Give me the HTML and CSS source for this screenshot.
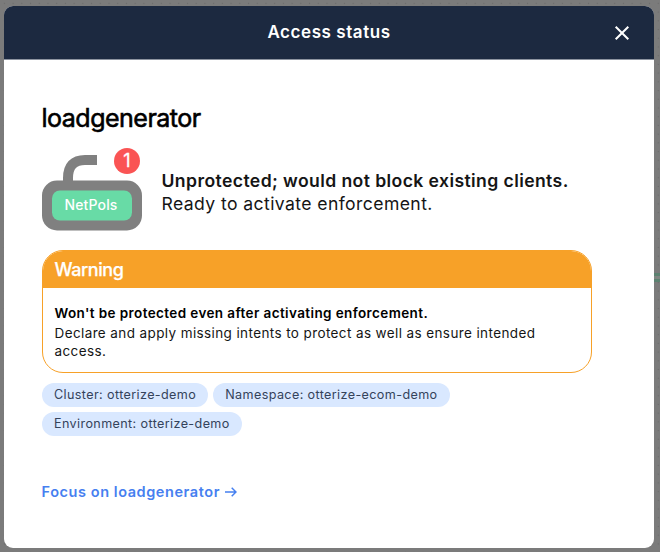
FILE: index.html
```html
<!DOCTYPE html>
<html lang="en">
<head>
<meta charset="utf-8">
<title>Access status</title>
<link rel="stylesheet" href="styles.css">
</head>
<body>
<div class="edge"></div>
<main class="modal">
  <header class="modal-header">
    <h1 class="title">Access status</h1>
    <button class="close" aria-label="Close"><svg width="16" height="17" viewBox="0 0 16 17"><path d="M1.7 2.7L14.3 15.3M14.3 2.7L1.7 15.3" stroke="#fff" stroke-width="2"/></svg></button>
  </header>
  <section class="content">
    <h2 class="service">loadgenerator</h2>
    <div class="status">
      <div class="lock">
        <svg width="100" height="84" viewBox="0 0 100 84">
          <path d="M26 36V30Q26 12 43 12H55" fill="none" stroke="#808080" stroke-width="10"/>
          <rect y="32.5" width="100" height="50" rx="15" fill="#808080"/>
          <rect x="10" y="42.5" width="80" height="30" rx="8" fill="#68dba6"/>
        </svg>
        <span class="lock-label">NetPols</span>
        <span class="count">1</span>
      </div>
      <div class="status-text">
        <strong class="status-main">Unprotected; would not block existing clients.</strong>
        <span class="status-sub">Ready to activate enforcement.</span>
      </div>
    </div>
    <div class="warning">
      <h3 class="warning-title">Warning</h3>
      <div class="warning-body">
        <strong class="warning-main">Won't be protected even after activating enforcement.</strong>
        <p class="warning-sub">Declare and apply missing intents to protect as well as ensure intended access.</p>
      </div>
    </div>
    <div class="tags">
      <span class="tag cluster">Cluster: otterize-demo</span>
      <span class="tag namespace">Namespace: otterize-ecom-demo</span>
      <span class="tag environment">Environment: otterize-demo</span>
    </div>
    <a class="focus">Focus on loadgenerator <svg width="12" height="12" viewBox="0 0 12 12"><path d="M0 6H11M6.7 1.8L11 6L6.7 10.2" fill="none" stroke="currentColor" stroke-width="1.5"/></svg></a>
  </section>
</main>
</body>
</html>
```
FILE: styles.css
```css
* { box-sizing: border-box; }
body { position: relative; margin: 0; height: 552px; padding: 5.5px 6px 4px 4px; background: #7b7b7b radial-gradient(circle at center, #6b6b6b 0.7px, transparent 1px) 0 -1px / 8.73px 8.73px; font-family: Inter, sans-serif; color: #151515; overflow: hidden; }
h1, h2, h3, p { margin: 0; }
.edge { position: absolute; right: 0; top: 273px; width: 6px; height: 9px; border: solid #5c8271; border-width: 3px 0; background: #808682; }
.modal { position: relative; height: 542.5px; background: #fff; border-radius: 9px; overflow: hidden; }
.modal-header { height: 54px; background: #1c2940; border-bottom: 1px solid #8d94a0; display: grid; grid-template-columns: 64px 1fr 64px; align-items: center; }
.title { grid-column: 2; text-align: center; color: #fff; font-size: 17px; font-weight: 600; line-height: 20px; letter-spacing: .56px; }
.close { border: 0; background: none; padding: 0; display: flex; justify-content: center; }
.service { margin-left: -.5px; font-size: 25px; line-height: 30px; font-weight: 400; letter-spacing: -.5px; color: #000; -webkit-text-stroke: .6px #000; }
.content { padding: 43.5px 62px 0 38px; }
.status { display: flex; gap: 19.5px; margin-top: 15px; }
.lock { position: relative; width: 100px; height: 84px; }
.lock svg { display: block; }
.lock-label { position: absolute; left: 9px; top: 48px; width: 80px; text-align: center; color: #fff; font-size: 14px; line-height: 18px; font-weight: 500; letter-spacing: .15px; }
.count { position: absolute; left: 72px; top: 0; width: 26px; height: 26px; border-radius: 50%; background: #fa5454; color: #fff; text-align: center; font-size: 18px; line-height: 25px; -webkit-text-stroke: .3px #fff; }
.status-text { padding-top: 21px; display: flex; flex-direction: column; font-size: 17.6px; line-height: 23px; letter-spacing: .4px; white-space: nowrap; }
.status-main { font-weight: 600; }
.warning { height: 123px; margin-top: 18px; border: 1px solid #f7a128; border-radius: 21px; overflow: hidden; }
.warning-title { height: 37px; padding-left: 11.5px; background: #f7a128; color: #fff; font-size: 18px; line-height: 38px; font-weight: 500; letter-spacing: -.4px; -webkit-text-stroke: .25px #fff; }
.warning-body { padding: 15px 11.5px; font-size: 13.5px; line-height: 18px; letter-spacing: .39px; }
.warning-main { display: block; font-weight: 600; line-height: 20px; color: #000; }
.warning-sub { margin-top: 1px; }
.tags { display: flex; flex-wrap: wrap; gap: 5px; margin-top: 10px; }
.tag { height: 24px; border-radius: 12px; padding: 0 12px; background: #d9e8ff; color: #34435b; font-size: 12.6px; line-height: 23px; letter-spacing: .38px; }
.focus { margin: 46px 0 0 -.5px; display: flex; align-items: center; gap: 5px; color: #4680f0; font-size: 14.5px; line-height: 20px; font-weight: 600; letter-spacing: .57px; }
```
